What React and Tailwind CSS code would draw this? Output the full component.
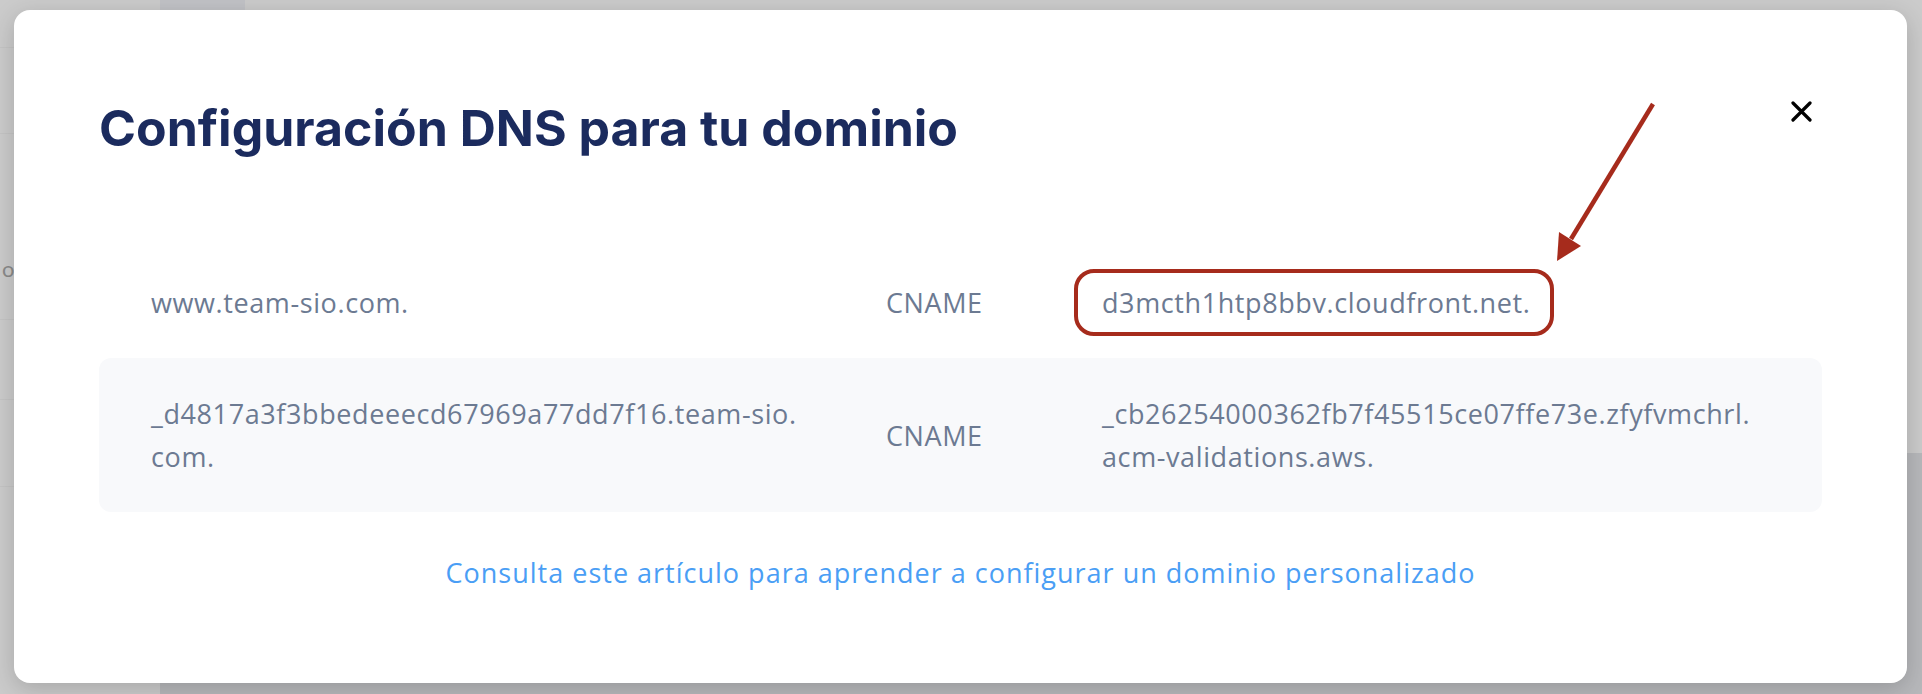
import React from 'react';

const records = [
  {
    name: ['www.team-sio.com.'],
    type: 'CNAME',
    value: ['d3mcth1htp8bbv.cloudfront.net.'],
    highlight: true,
  },
  {
    name: ['_d4817a3f3bbedeeecd67969a77dd7f16.team-sio.', 'com.'],
    type: 'CNAME',
    value: ['_cb26254000362fb7f45515ce07ffe73e.zfyfvmchrl.', 'acm-validations.aws.'],
    shaded: true,
  },
];

const Lines = ({ parts }) => (
  <span className="whitespace-nowrap">
    {parts.map((p, i) => (
      <React.Fragment key={i}>
        {i > 0 && <br />}
        {p}
      </React.Fragment>
    ))}
  </span>
);

const Highlight = ({ children }) => (
  <span className="relative inline-block">
    {children}
    <span className="pointer-events-none absolute -left-[28px] -right-[24px] -top-[12px] -bottom-[12px] rounded-[20px] border-[4px] border-[#a62b1c]" />
    <svg
      className="pointer-events-none absolute left-full top-[-182px] ml-[17px]"
      width="115"
      height="170"
      viewBox="0 0 115 170"
    >
      <line x1="106" y1="5" x2="24" y2="140" stroke="#a62b1c" strokeWidth="4.5" />
      <polygon points="10,162 12,133 34,147" fill="#a62b1c" />
    </svg>
  </span>
);

const BackdropPage = () => (
  <div className="flex h-full">
    <aside className="flex w-[160px] flex-col bg-[#cbcbcb]">
      <div className="h-[48px] border-b border-[#c4c4c4]" />
      <div className="h-[86px] border-b border-[#c4c4c4]" />
      <div className="h-[186px] border-b border-[#c4c4c4] pt-[118px] pl-[2px] font-['Lato',sans-serif] text-[22px] text-[#8a8a8a]">
        or
      </div>
      <div className="h-[80px] border-b border-[#c4c4c4]" />
      <div className="h-[87px] border-b border-[#c4c4c4]" />
      <div className="flex-1" />
    </aside>
    <main className="flex flex-1 flex-col">
      <div className="flex h-[453px] flex-col bg-[#cbcbcb]">
        <div className="h-[10px] w-[85px] bg-[#c1c2c6]" />
      </div>
      <div className="flex-1 bg-[#b7b8bb]" />
    </main>
  </div>
);

export default function App() {
  return (
    <div className="relative h-[694px] w-[1922px] overflow-hidden bg-[#cbcbcb]">
      <BackdropPage />

      <div className="absolute left-[14px] top-[10px] h-[673px] w-[1893px] rounded-[16px] bg-white shadow-[0_6px_24px_rgba(0,0,0,0.18)]">
        <div className="relative flex h-full flex-col px-[85px] pt-[88px]">
          <h2 className="font-['Inter',sans-serif] text-[50px] font-bold leading-[60px] text-[#1b2b5e]">
            Configuración DNS para tu dominio
          </h2>

          <button className="absolute right-[95px] top-[91px] flex h-[21px] w-[21px] items-center justify-center">
            <svg width="21" height="21" viewBox="0 0 21 21">
              <path d="M2 2 L19 19 M19 2 L2 19" stroke="#000" strokeWidth="3.2" strokeLinecap="round" />
            </svg>
          </button>

          <div className="mt-[89px] flex flex-col font-['Open_Sans',sans-serif] text-[27px] leading-[43px] tracking-[0.6px] text-[#6c7a92]">
            {records.map((r, i) => (
              <div
                key={i}
                className={`grid grid-cols-[735px_216px_1fr] items-center rounded-[12px] px-[52px] py-[34px] ${
                  r.shaded ? 'bg-[#f8f9fb]' : 'bg-white'
                }`}
              >
                <Lines parts={r.name} />
                <span>{r.type}</span>
                <div>
                  {r.highlight ? (
                    <Highlight>
                      <Lines parts={r.value} />
                    </Highlight>
                  ) : (
                    <Lines parts={r.value} />
                  )}
                </div>
              </div>
            ))}
          </div>

          <a
            href="#"
            className="mt-[41px] self-center font-['Open_Sans',sans-serif] text-[27px] leading-[40px] tracking-[1px] text-[#4a9ef5]"
          >
            Consulta este artículo para aprender a configurar un dominio personalizado
          </a>
        </div>
      </div>
    </div>
  );
}
